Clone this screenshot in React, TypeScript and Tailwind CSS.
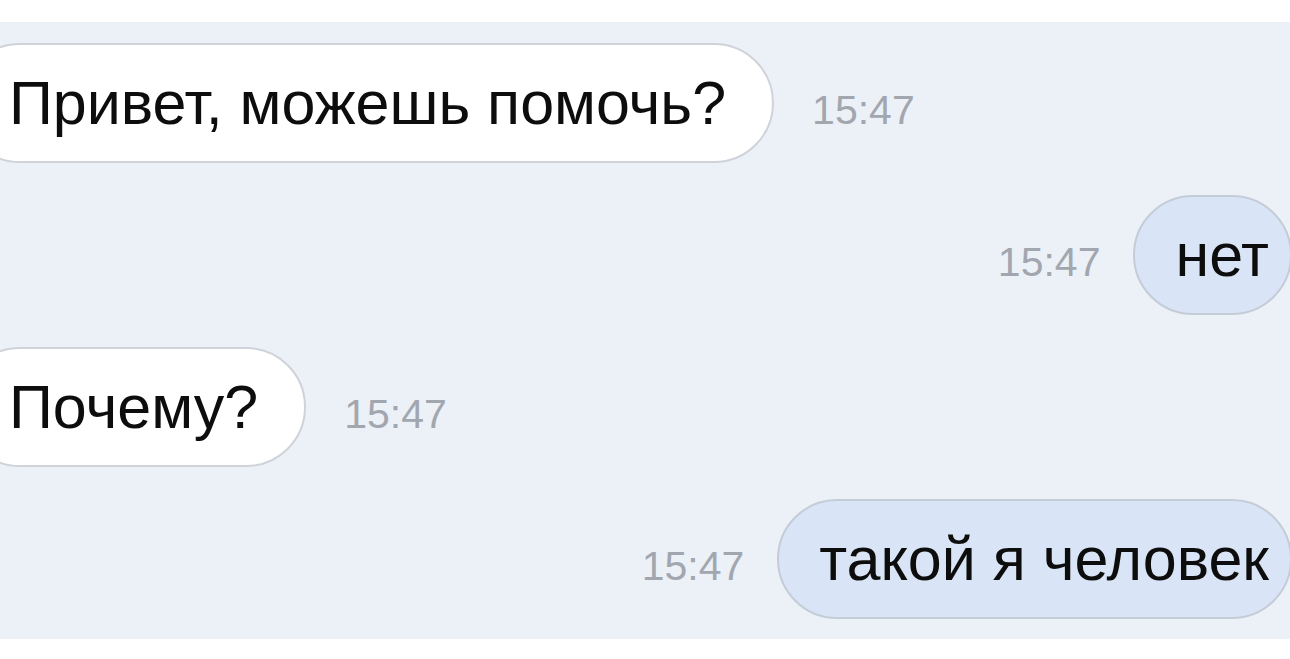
const Time = () => (
  <span className="text-[41px] leading-none text-[#a2a7af] font-['Liberation_Sans',Arial,sans-serif]">15:47</span>
);

const Incoming = ({ text }: { text: string }) => (
  <div className="flex items-baseline gap-[38px]">
    <div className="h-[120px] flex items-center rounded-full bg-white border-2 border-[#cfd3d9] pl-[47px] pr-[46px] -ml-[40px]">
      <span className="text-[61px] leading-none text-[#0d0d0d] whitespace-nowrap">{text}</span>
    </div>
    <Time />
  </div>
);

const Outgoing = ({ text }: { text: string }) => (
  <div className="flex items-baseline justify-end gap-[33px]">
    <Time />
    <div className="h-[120px] flex items-center rounded-full bg-[#d9e5f6] border-2 border-[#c3ccd7] pl-[40px] pr-[21px] -mr-[2px]">
      <span className="text-[61px] leading-none text-[#0d0d0d] whitespace-nowrap">{text}</span>
    </div>
  </div>
);

export default function App() {
  return (
    <div className="w-[1290px] h-[659px] overflow-hidden bg-white font-['Liberation_Sans',Arial,sans-serif]">
      <div className="h-[22px] bg-white" />
      <div className="h-[617px] bg-[#ecf1f8] flex flex-col gap-[32px] pt-[21px] overflow-hidden">
        <Incoming text="Привет, можешь помочь?" />
        <Outgoing text="нет" />
        <Incoming text="Почему?" />
        <Outgoing text="такой я человек" />
      </div>
      <div className="h-[20px] bg-white" />
    </div>
  );
}
